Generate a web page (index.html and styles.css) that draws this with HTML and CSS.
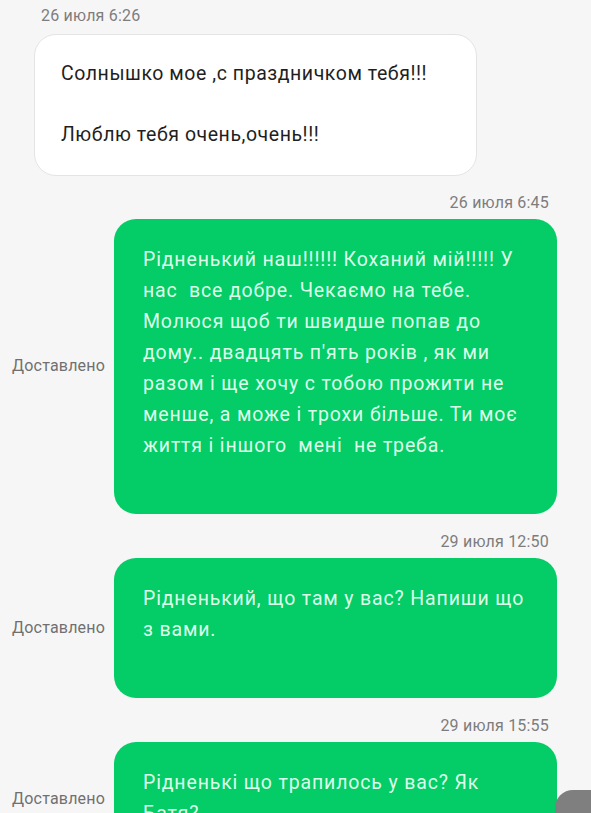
FILE: index.html
```html
<!DOCTYPE html>
<html lang="ru">
<head>
<meta charset="utf-8">
<title>Сообщения</title>
<link rel="stylesheet" href="styles.css">
</head>
<body>
<main class="thread">
  <section class="msg msg-in">
    <div class="stamp">26 июля 6:26</div>
    <div class="bubble bubble-in">Солнышко мое ,с праздничком тебя!!!<br><br>Люблю тебя очень,очень!!!</div>
  </section>

  <section class="msg msg-out">
    <div class="stamp">26 июля 6:45</div>
    <div class="row">
      <span class="status">Доставлено</span>
      <div class="bubble bubble-out">Рідненький наш!!!!!! Коханий мій!!!!! У<br>нас&nbsp; все добре. Чекаємо на тебе.<br>Молюся щоб ти швидше попав до<br>дому.. двадцять п'ять років , як ми<br>разом і ще хочу с тобою прожити не<br>менше, а може і трохи більше. Ти моє<br>життя і іншого&nbsp; мені&nbsp; не треба.</div>
    </div>
  </section>

  <section class="msg msg-out">
    <div class="stamp">29 июля 12:50</div>
    <div class="row">
      <span class="status">Доставлено</span>
      <div class="bubble bubble-out">Рідненький, що там у вас? Напиши що<br>з вами.</div>
    </div>
  </section>

  <section class="msg msg-out">
    <div class="stamp">29 июля 15:55</div>
    <div class="row row-pending">
      <span class="status">Доставлено</span>
      <div class="bubble bubble-out">Рідненькі що трапилось у вас? Як<br>Батя?</div>
    </div>
  </section>
</main>
<div class="scroll-btn"></div>
</body>
</html>
```

FILE: styles.css
```css
html, body {
  margin: 0;
  padding: 0;
  height: 100%;
  overflow: hidden;
}

body {
  background: #f7f6f7;
  font-family: Roboto, "Noto Sans", "Liberation Sans", sans-serif;
  position: relative;
}

.thread {
  display: flex;
  flex-direction: column;
  padding-top: 6px;
}

.msg {
  display: flex;
  flex-direction: column;
}

.msg-in + .msg-out {
  margin-top: 17px;
}

.msg-out + .msg-out {
  margin-top: 18px;
}

.stamp {
  font-size: 16px;
  line-height: 20px;
  letter-spacing: 0.2px;
  color: #7d7d7d;
}

.msg-in .stamp {
  padding-left: 41px;
  margin-bottom: 8px;
}

.msg-out .stamp {
  align-self: flex-end;
  padding-right: 42px;
  margin-bottom: 6px;
}

.bubble {
  font-size: 19.5px;
  border-radius: 22px;
  box-sizing: border-box;
  white-space: nowrap;
}

.bubble-in {
  margin-left: 34px;
  width: 443px;
  background: #ffffff;
  border: 1px solid #e4e4e6;
  color: #1f1f1f;
  line-height: 30.5px;
  letter-spacing: 0.55px;
  padding: 24px 26px 24px 26px;
}

.row {
  display: grid;
  grid-template-columns: 114px 443px;
  align-items: center;
}

/* the newest message: its label sits by the visible upper part */
.row-pending .status {
  align-self: start;
  margin-top: 47px;
}

.status {
  padding-left: 12px;
  font-size: 16px;
  line-height: 20px;
  letter-spacing: 0.2px;
  color: #707070;
}

.bubble-out {
  background: #04cc66;
  color: #dcffe9;
  line-height: 31px;
  letter-spacing: 0.85px;
  padding: 25px 20px 53px 29px;
}

.scroll-btn {
  position: absolute;
  left: 555px;
  top: 790px;
  width: 70px;
  height: 70px;
  border-radius: 18px;
  background: #7f7f7f;
}
```
